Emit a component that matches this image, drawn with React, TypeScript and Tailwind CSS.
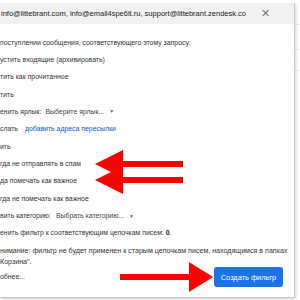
import React from 'react';

const rows: { cut: string; extra?: React.ReactNode }[] = [
  { cut: 'устить входящие (архивировать)' },
  { cut: 'тить как прочитанное' },
  { cut: 'тить' },
  {
    cut: 'енить ярлык:',
    extra: <Select label="Выберите ярлык..." className="ml-[4px]" />,
  },
  {
    cut: 'слать',
    extra: <span className="ml-[7px] text-[#1155cc]">добавить адреса пересылки</span>,
  },
  { cut: 'ить' },
  { cut: 'гда не отправлять в спам' },
  { cut: 'да помечать как важное' },
  { cut: 'гда не помечать как важное' },
  {
    cut: 'вить категорию:',
    extra: <Select label="Выбрать категорию..." className="ml-[5px]" />,
  },
];

function Select({ label, className }: { label: string; className: string }) {
  return (
    <span className={`${className} inline-flex items-center gap-[5px] text-[#444]`}>
      {label}
      <span className="text-[5px] text-[#666]">▼</span>
    </span>
  );
}

export default function App() {
  return (
    <div
      className="relative w-[300px] h-[300px] overflow-hidden bg-white text-[#333] text-[6.9px]"
      style={{ fontFamily: '"Liberation Sans", Arial, sans-serif' }}
    >
      {/* background inbox rows peeking on the right */}
      <div className="absolute right-0 top-0 w-[10px] h-full">
        <div className="h-[25px] border-b border-[#eee]" />
        <div className="h-[25px] border-b border-[#eee]" />
        <div className="h-[21px] border-b border-[#eee]" />
      </div>

      {/* filter dialog */}
      <div className="relative mt-[3px] w-[295px] h-[295px] bg-white border-r border-b border-[#c8c8c8] shadow-[1px_2px_3px_rgba(0,0,0,0.15)] flex flex-col">
        <div className="h-[21px] bg-[#f1f1f1] flex items-center pl-[1px] pr-[24px] text-[7.5px] text-[#222] whitespace-nowrap">
          <span className="flex-1 overflow-hidden">
            info@littebrant.com, info@email4spe6lt.ru, support@littebrant.zendesk.co
          </span>
          <span className="text-[11px] text-[#777] leading-none">✕</span>
        </div>

        <div className="pt-[10px] flex flex-col whitespace-nowrap">
          <div className="h-[17.36px] flex items-center">
            поступлении сообщения, соответствующего этому запросу:
          </div>
          {rows.map((r, i) => (
            <div key={i} className="h-[17.36px] flex items-center">
              <span>{r.cut}</span>
              {r.extra}
            </div>
          ))}
          <div className="h-[17.36px] flex items-center">
            енить фильтр к соответствующим цепочкам писем:&nbsp;<b className="text-[#222]">0</b>.
          </div>

          <p className="mt-[4px] leading-[10.5px] text-[7.1px]">
            нимание: фильтр не будет применен к старым цепочкам писем, находящимся в папках
            <br />
            Корзина".
          </p>

          <div className="h-[20px] flex items-center justify-between pr-[11px]">
            <span>обнее...</span>
            <button className="h-[20px] w-[69px] rounded-[3px] bg-[#1a73e8] text-white text-[7.4px]">
              Создать фильтр
            </button>
          </div>
        </div>
      </div>

      {/* red annotation arrows */}
      <svg className="absolute inset-0" width="300" height="300" viewBox="0 0 300 300">
        <polygon
          fill="#ff0000"
          points="95,164 123,150 123,161 183,161 183,167 123,167 123,178"
        />
        <polygon
          fill="#ff0000"
          points="95,180 123,166 123,177 183,177 183,183 123,183 123,194"
        />
        <polygon
          fill="#ff0000"
          points="120,274 189,274 189,262 213,277 189,292 189,280 120,280"
        />
      </svg>
    </div>
  );
}
